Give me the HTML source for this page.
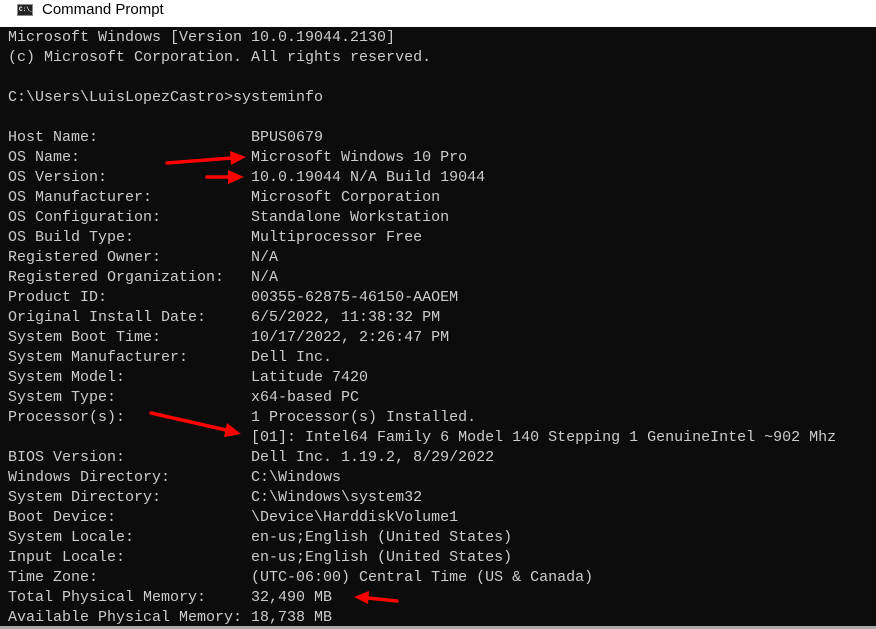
<!DOCTYPE html>
<html><head><style>
body{margin:0;width:876px;height:629px;overflow:hidden;background:#0c0c0c;position:relative}
.t{position:absolute;left:0;top:0;width:876px;height:27px;background:#fff;font-family:"Liberation Sans",sans-serif;font-size:15px;color:#000}
.t span{position:absolute;left:42px;top:1px}
.ic{position:absolute;left:17px;top:4px;width:16px;height:12px;background:#222;border:1px solid #888;box-sizing:border-box;font:bold 6px "Liberation Mono",monospace;color:#fff;line-height:9px;padding-left:1px}
pre{position:absolute;left:8px;top:28px;margin:0;font-family:"Liberation Mono",monospace;font-size:15px;line-height:20px;color:#cccccc}
.b{position:absolute;left:0;top:626px;width:876px;height:3px;background:#aaa}
</style></head><body>
<div class="t"><div class="ic">C:\_</div><span>Command Prompt</span></div>
<pre>Microsoft Windows [Version 10.0.19044.2130]
(c) Microsoft Corporation. All rights reserved.

C:\Users\LuisLopezCastro&gt;systeminfo

Host Name:                 BPUS0679
OS Name:                   Microsoft Windows 10 Pro
OS Version:                10.0.19044 N/A Build 19044
OS Manufacturer:           Microsoft Corporation
OS Configuration:          Standalone Workstation
OS Build Type:             Multiprocessor Free
Registered Owner:          N/A
Registered Organization:   N/A
Product ID:                00355-62875-46150-AAOEM
Original Install Date:     6/5/2022, 11:38:32 PM
System Boot Time:          10/17/2022, 2:26:47 PM
System Manufacturer:       Dell Inc.
System Model:              Latitude 7420
System Type:               x64-based PC
Processor(s):              1 Processor(s) Installed.
                           [01]: Intel64 Family 6 Model 140 Stepping 1 GenuineIntel ~902 Mhz
BIOS Version:              Dell Inc. 1.19.2, 8/29/2022
Windows Directory:         C:\Windows
System Directory:          C:\Windows\system32
Boot Device:               \Device\HarddiskVolume1
System Locale:             en-us;English (United States)
Input Locale:              en-us;English (United States)
Time Zone:                 (UTC-06:00) Central Time (US &amp; Canada)
Total Physical Memory:     32,490 MB
Available Physical Memory: 18,738 MB</pre>
<svg width="876" height="629" style="position:absolute;left:0;top:0">
<g stroke="#f00" stroke-width="3.5" stroke-linecap="round" fill="#f00">
<line x1="167" y1="163" x2="232" y2="158"/><polygon points="246,157 230,151 231,165" stroke="none"/>
<line x1="207" y1="177" x2="230" y2="177"/><polygon points="244,177 228,170 228,184" stroke="none"/>
<line x1="151" y1="413" x2="226" y2="430"/><polygon points="241,434 227,423 224,437" stroke="none"/>
<line x1="397" y1="601" x2="368" y2="598"/><polygon points="354,597 369,591 368,604" stroke="none"/>
</g></svg>
<div class="b"></div>
</body></html>
